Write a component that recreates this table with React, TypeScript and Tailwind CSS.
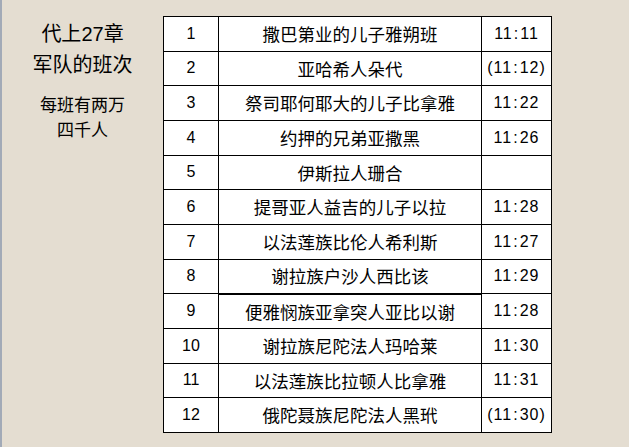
import React from "react";

const rows: [string, string, string][] = [
  ["1", "撒巴第业的儿子雅朔班", "11:11"],
  ["2", "亚哈希人朵代", "(11:12)"],
  ["3", "祭司耶何耶大的儿子比拿雅", "11:22"],
  ["4", "约押的兄弟亚撒黑", "11:26"],
  ["5", "伊斯拉人珊合", ""],
  ["6", "提哥亚人益吉的儿子以拉", "11:28"],
  ["7", "以法莲族比伦人希利斯", "11:27"],
  ["8", "谢拉族户沙人西比该", "11:29"],
  ["9", "便雅悯族亚拿突人亚比以谢", "11:28"],
  ["10", "谢拉族尼陀法人玛哈莱", "11:30"],
  ["11", "以法莲族比拉顿人比拿雅", "11:31"],
  ["12", "俄陀聂族尼陀法人黑玳", "(11:30)"],
];

const cjk = { fontFamily: '"Noto Sans CJK SC", "Noto Sans", sans-serif' };
const num = { fontFamily: '"Liberation Sans", Arial, sans-serif' };

export default function App() {
  return (
    <div className="w-[629px] h-[447px] bg-[#e4ddd1] flex overflow-hidden text-black">
      <div className="w-[2px] h-full bg-[#a2aab7]" />
      <div className="w-[161px] flex flex-col items-center pt-[18px]" style={cjk}>
        <div className="text-[20px] leading-[30px] text-center">
          <div>代上<span style={num}>27</span>章</div>
          <div>军队的班次</div>
        </div>
        <div className="text-[17px] leading-[25px] text-center mt-[12px]">
          <div>每班有两万</div>
          <div>四千人</div>
        </div>
      </div>
      <div className="pt-[16px]">
        <table className="border-collapse bg-white border border-black">
          <tbody>
            {rows.map(([n, name, ref], i) => (
              <tr key={n} className="h-[34.67px]">
                <td className="w-[55px] border border-black text-center text-[16px] p-0" style={num}>
                  {n}
                </td>
                <td
                  className={
                    i === 7
                      ? "w-[263px] border border-black border-b-2 text-center text-[17.5px] p-0 leading-none"
                      : "w-[263px] border border-black text-center text-[17.5px] p-0 leading-none"
                  }
                  style={cjk}
                >
                  {name}
                </td>
                <td className="w-[70px] border border-black text-center text-[16px] p-0 tracking-[1px]" style={num}>
                  {ref.replace(":", " : ").split(" ").map((s, k) => (
                    <span key={k} className={s === ":" ? "mx-[1px]" : ""}>{s}</span>
                  ))}
                </td>
              </tr>
            ))}
          </tbody>
        </table>
      </div>
    </div>
  );
}
